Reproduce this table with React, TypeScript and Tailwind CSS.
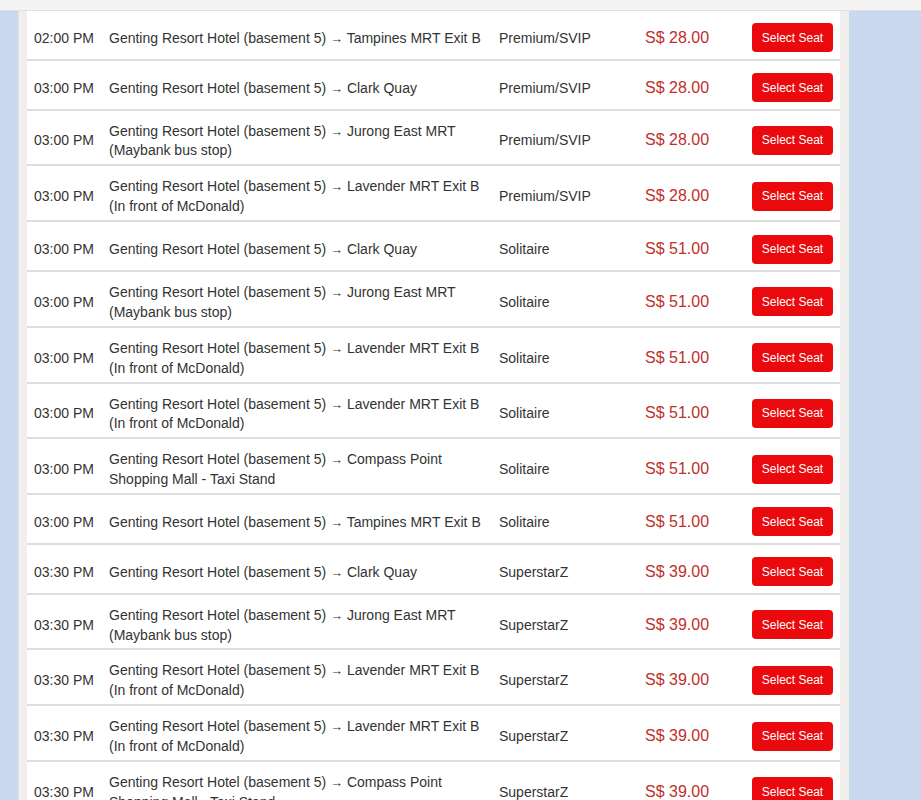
const FROM = "Genting Resort Hotel (basement 5)";

type Trip = {
  time: string;
  to: string[];
  coach: string;
  price: string;
};

const TRIPS: Trip[] = [
  { time: "02:00 PM", to: ["Tampines MRT Exit B"], coach: "Premium/SVIP", price: "28.00" },
  { time: "03:00 PM", to: ["Clark Quay"], coach: "Premium/SVIP", price: "28.00" },
  { time: "03:00 PM", to: ["Jurong East MRT", "(Maybank bus stop)"], coach: "Premium/SVIP", price: "28.00" },
  { time: "03:00 PM", to: ["Lavender MRT Exit B", "(In front of McDonald)"], coach: "Premium/SVIP", price: "28.00" },
  { time: "03:00 PM", to: ["Clark Quay"], coach: "Solitaire", price: "51.00" },
  { time: "03:00 PM", to: ["Jurong East MRT", "(Maybank bus stop)"], coach: "Solitaire", price: "51.00" },
  { time: "03:00 PM", to: ["Lavender MRT Exit B", "(In front of McDonald)"], coach: "Solitaire", price: "51.00" },
  { time: "03:00 PM", to: ["Lavender MRT Exit B", "(In front of McDonald)"], coach: "Solitaire", price: "51.00" },
  { time: "03:00 PM", to: ["Compass Point", "Shopping Mall - Taxi Stand"], coach: "Solitaire", price: "51.00" },
  { time: "03:00 PM", to: ["Tampines MRT Exit B"], coach: "Solitaire", price: "51.00" },
  { time: "03:30 PM", to: ["Clark Quay"], coach: "SuperstarZ", price: "39.00" },
  { time: "03:30 PM", to: ["Jurong East MRT", "(Maybank bus stop)"], coach: "SuperstarZ", price: "39.00" },
  { time: "03:30 PM", to: ["Lavender MRT Exit B", "(In front of McDonald)"], coach: "SuperstarZ", price: "39.00" },
  { time: "03:30 PM", to: ["Lavender MRT Exit B", "(In front of McDonald)"], coach: "SuperstarZ", price: "39.00" },
  { time: "03:30 PM", to: ["Compass Point", "Shopping Mall - Taxi Stand"], coach: "SuperstarZ", price: "39.00" },
];

function TripRow({ trip }: { trip: Trip }) {
  return (
    <div className="grid min-h-[49.8px] grid-cols-[82px_390px_146px_107px_81px_7px] items-center border-b-2 border-[#dedede] pt-[10px] pb-[4px] text-[14px] leading-[20px] text-[#333]">
      <div className="pl-[7px] whitespace-nowrap">{trip.time}</div>
      <div className="whitespace-nowrap">
        <div className="h-[19.9px]">
          {FROM} <span className="text-[13px] leading-[0]">→</span> {trip.to[0]}
        </div>
        {trip.to[1] && <div className="h-[19.9px]">{trip.to[1]}</div>}
      </div>
      <div className="whitespace-nowrap">{trip.coach}</div>
      <div className="whitespace-nowrap text-[16px] text-[#c0302b]">S$&nbsp;{trip.price}</div>
      <button
        type="button"
        className="h-[29px] w-[81px] rounded-[4px] bg-[#ea0a0e] text-[12px] text-white"
      >
        Select Seat
      </button>
      <div />
    </div>
  );
}

export default function App() {
  return (
    <div className="h-[800px] overflow-hidden bg-[#c9d8ee] font-['Liberation_Sans',Arial,sans-serif]">
      <div className="h-[11px] border-b border-[#e0e0e0] bg-[#f4f4f4]" />
      <div className="flex">
        <div className="w-[18px] shrink-0" />
        <div className="w-[831px] shrink-0 border-l border-[#e3e3e3] bg-[#f0efee] px-[8px] pr-[9px]">
          <div className="bg-white">
            {TRIPS.map((trip, i) => (
              <TripRow key={i} trip={trip} />
            ))}
          </div>
        </div>
        <div className="flex-1" />
      </div>
    </div>
  );
}
